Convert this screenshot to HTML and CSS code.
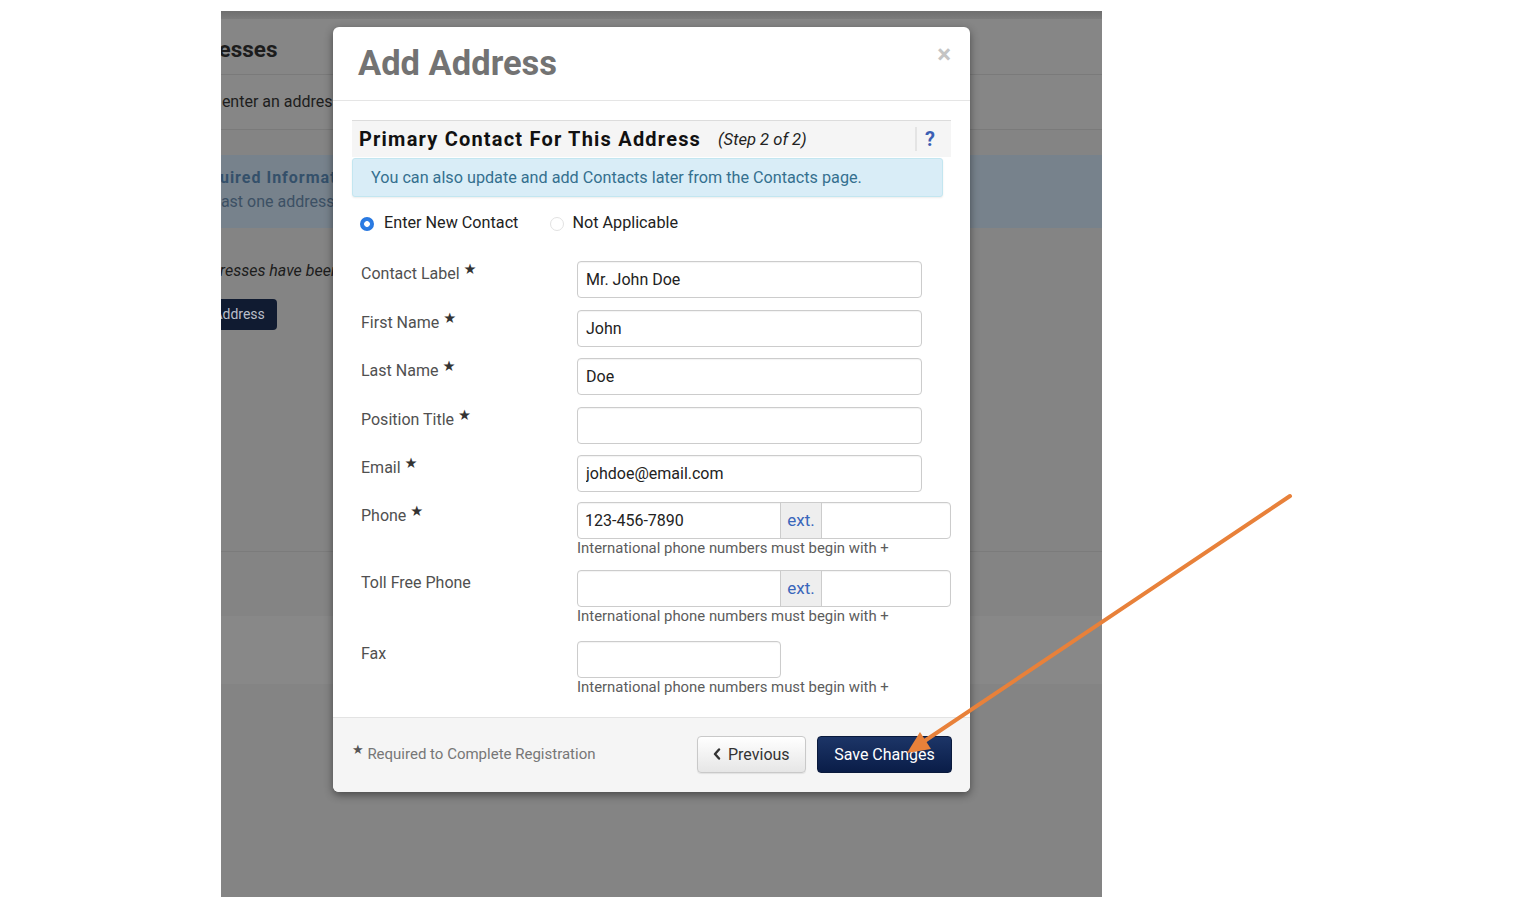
FILE: index.html
```html
<!DOCTYPE html>
<html lang="en">
<head>
<meta charset="utf-8">
<title>Add Address</title>
<link rel="stylesheet" href="styles.css">
</head>
<body>
<div class="canvas">
  <div class="shot">
    <div class="bg-page">
      <div class="bg-topbar"></div>
      <div class="bg-inner">
        <h2 class="bg-title">Addresses</h2>
        <p class="bg-intro">Please enter an address for your organization below.</p>
        <div class="bg-alert">
          <div class="bg-alert-title">Required Information</div>
          <div class="bg-alert-text">At least one address is required.</div>
        </div>
        <p class="bg-empty">No addresses have been entered yet.</p>
        <div class="bg-btn">Add Address</div>
      </div>
      <div class="bg-band1"></div>
      <div class="bg-band2"></div>
    </div>

    <div class="modal">
      <div class="modal-header">
        <h1 class="modal-title">Add Address</h1>
        <span class="modal-close">×</span>
      </div>
      <div class="modal-body">
        <div class="section-head">
          <span class="section-title">Primary Contact For This Address</span>
          <span class="section-step">(Step 2 of 2)</span>
          <span class="section-help">?</span>
        </div>
        <div class="info">You can also update and add Contacts later from the Contacts page.</div>
        <div class="radios">
          <label class="radio"><span class="radio-dot on"></span>Enter New Contact</label>
          <label class="radio radio-second"><span class="radio-dot"></span>Not Applicable</label>
        </div>
        <div class="form">
          <div class="row">
            <div class="label">Contact Label <span class="req">★</span></div>
            <div class="field"><input class="input" type="text" value="Mr. John Doe"></div>
          </div>
          <div class="row">
            <div class="label">First Name <span class="req">★</span></div>
            <div class="field"><input class="input" type="text" value="John"></div>
          </div>
          <div class="row">
            <div class="label">Last Name <span class="req">★</span></div>
            <div class="field"><input class="input" type="text" value="Doe"></div>
          </div>
          <div class="row">
            <div class="label">Position Title <span class="req">★</span></div>
            <div class="field"><input class="input" type="text" value=""></div>
          </div>
          <div class="row row-email">
            <div class="label">Email <span class="req">★</span></div>
            <div class="field"><input class="input" type="text" value="johdoe@email.com"></div>
          </div>
          <div class="row row-phone">
            <div class="label label-phone">Phone <span class="req">★</span></div>
            <div class="field">
              <div class="phone-group">
                <input class="phone-main" type="text" value="123-456-7890">
                <span class="addon">ext.</span>
                <input class="phone-ext" type="text" value="">
              </div>
              <div class="help">International phone numbers must begin with +</div>
            </div>
          </div>
          <div class="row row-toll">
            <div class="label">Toll Free Phone</div>
            <div class="field">
              <div class="phone-group">
                <input class="phone-main" type="text" value="">
                <span class="addon">ext.</span>
                <input class="phone-ext" type="text" value="">
              </div>
              <div class="help">International phone numbers must begin with +</div>
            </div>
          </div>
          <div class="row row-fax">
            <div class="label">Fax</div>
            <div class="field">
              <input class="input input-fax" type="text" value="">
              <div class="help">International phone numbers must begin with +</div>
            </div>
          </div>
        </div>
      </div>
      <div class="modal-footer">
        <div class="req-note"><span class="req">★</span> Required to Complete Registration</div>
        <div class="buttons">
          <button class="btn btn-default"><svg class="chev" width="8" height="12" viewBox="0 0 8 12"><path d="M6 1.5 L2 6 L6 10.5" fill="none" stroke="#333" stroke-width="2.4" stroke-linecap="round" stroke-linejoin="round"/></svg>Previous</button>
          <button class="btn btn-primary">Save Changes</button>
        </div>
      </div>
    </div>
  </div>

  <svg class="arrow" width="1527" height="910" viewBox="0 0 1527 910">
    <line x1="1290" y1="496" x2="923" y2="742" stroke="#e8813a" stroke-width="4" stroke-linecap="round"/>
    <polygon points="907,753 920,732 931,749" fill="#e8813a"/>
  </svg>
</div>
</body>
</html>
```
FILE: styles.css
```css
* { box-sizing: border-box; }

html, body {
  margin: 0;
  padding: 0;
  background: #ffffff;
  font-family: Roboto, "Liberation Sans", Arial, sans-serif;
}

.canvas {
  position: relative;
  width: 1527px;
  height: 910px;
  padding: 11px 0 0 221px;
  overflow: hidden;
}

.shot {
  position: relative;
  width: 881px;
  height: 886px;
  background: #848484;
  overflow: hidden;
}

/* ---------- dimmed background page ---------- */
.bg-page { width: 100%; }

.bg-topbar {
  height: 8px;
  background: linear-gradient(#6f6f6f, #7c7c7c);
}

.bg-inner {
  margin-left: -51px;
}

.bg-title {
  margin: 0;
  padding: 15px 0 10px 0;
  font-size: 22.5px;
  line-height: 30px;
  font-weight: 700;
  color: #1c1c1c;
  border-bottom: 1px solid #7a7a7a;
  background: #868686;
}

.bg-intro {
  margin: 0;
  padding: 15px 0 15px 0;
  font-size: 16px;
  line-height: 24px;
  color: #1d1d1d;
  border-bottom: 1px solid #7a7a7a;
  background: #868686;
}

.bg-alert {
  margin-top: 25px;
  padding: 11px 19px 14px 19px;
  background: #77828c;
  font-size: 16px;
  line-height: 24px;
}

.bg-alert-title {
  font-weight: 700;
  letter-spacing: 1px;
  color: #34506a;
}

.bg-alert-text { color: #3c5064; }

.bg-empty {
  margin: 31px 0 0 0;
  font-size: 16px;
  line-height: 24px;
  font-style: italic;
  color: #1c1c1c;
}

.bg-btn {
  display: inline-block;
  margin-top: 16px;
  margin-left: 3px;
  height: 31px;
  padding: 0 12px;
  line-height: 31px;
  font-size: 14px;
  color: #b9bec8;
  background: #101b31;
  border-radius: 4px;
}

.bg-band1 {
  margin-top: 221px;
  height: 65px;
  border-top: 1px solid #7b7b7b;
  background: #848484;
}

.bg-band2 {
  height: 68px;
  background: #888888;
}

/* ---------- modal ---------- */
.modal {
  position: absolute;
  left: 112px;
  top: 16px;
  width: 637px;
  background: #ffffff;
  border-radius: 6px;
  box-shadow: 0 3px 9px rgba(0, 0, 0, 0.45);
  overflow: hidden;
}

.modal-header {
  display: flex;
  justify-content: space-between;
  align-items: center;
  height: 74px;
  padding: 0 19px 1px 25px;
  border-bottom: 1px solid #e5e5e5;
}

.modal-title {
  margin: 0;
  font-size: 34.5px;
  line-height: 40px;
  font-weight: 700;
  color: #737373;
}

.modal-close {
  align-self: flex-start;
  margin-top: 14px;
  font-size: 26px;
  line-height: 26px;
  font-weight: 700;
  color: #c4c4c4;
}

.modal-body {
  padding: 19px 19px 21px 19px;
}

.section-head {
  display: flex;
  align-items: center;
  height: 37px;
  padding-left: 7px;
  background: #f5f5f5;
  border-top: 1px solid #dcdcdc;
}

.section-title {
  font-size: 20px;
  font-weight: 700;
  letter-spacing: 1.2px;
  color: #111111;
}

.section-step {
  margin-left: 17px;
  font-size: 16.6px;
  font-style: italic;
  color: #222222;
}

.section-help {
  margin-left: auto;
  margin-right: 16px;
  padding-left: 8px;
  height: 24px;
  line-height: 24px;
  border-left: 2px solid #e4e4e4;
  font-size: 20px;
  font-weight: 700;
  color: #3b5fb4;
}

.info {
  margin: 1px 8px 0 0;
  height: 39px;
  padding-left: 18px;
  line-height: 38px;
  font-size: 16.2px;
  color: #34708f;
  background: #d9edf7;
  border: 1px solid #c3e6f0;
  border-radius: 3px;
  box-shadow: 0 1px 2px rgba(0, 0, 0, 0.08);
}

.radios {
  display: flex;
  align-items: center;
  margin-top: 12px;
  height: 26px;
  padding-left: 8px;
  font-size: 16.2px;
  color: #222222;
}

.radio {
  display: flex;
  align-items: center;
}

.radio-second { margin-left: 32px; }

.radio-dot {
  width: 14px;
  height: 14px;
  margin-right: 10px;
  margin-top: 4px;
  border-radius: 50%;
  background: #ffffff;
  border: 1px solid #e2e2e2;
}

.radio-second .radio-dot { margin-right: 8px; }

.radio-dot.on {
  border: none;
  background: radial-gradient(circle, #ffffff 0, #ffffff 2.5px, #2f7fe6 3.2px, #1f6fd8 100%);
}

.form { margin-top: 26px; }

.row {
  display: grid;
  grid-template-columns: 225px 1fr;
  margin-bottom: 11.5px;
}

.row-email { margin-bottom: 9.5px; }
.row-phone { margin-bottom: 13px; }
.row-toll { margin-bottom: 16px; }
.row-fax { margin-bottom: 0; }

.label {
  padding: 2px 0 0 9px;
  font-size: 16px;
  line-height: 22px;
  color: #505050;
}

.label-phone { padding-top: 3px; }

.req {
  font-family: "DejaVu Sans", sans-serif;
  font-size: 14.5px;
  line-height: 10px;
  color: #333333;
  vertical-align: 5px;
}

.input {
  display: block;
  width: 345px;
  height: 37px;
  margin: 0;
  padding: 0 8px;
  font-family: Roboto, "Liberation Sans", Arial, sans-serif;
  font-size: 16px;
  color: #222222;
  background: #ffffff;
  border: 1px solid #cccccc;
  border-radius: 4px;
  box-shadow: inset 0 1px 1px rgba(0, 0, 0, 0.05);
  outline: none;
}

.input-fax { width: 204px; }

.phone-group {
  display: flex;
  width: 374px;
  height: 37px;
  border: 1px solid #cccccc;
  border-radius: 4px;
  overflow: hidden;
  box-shadow: inset 0 1px 1px rgba(0, 0, 0, 0.05);
}

.phone-main, .phone-ext {
  height: 35px;
  margin: 0;
  padding: 0 7px;
  border: none;
  background: transparent;
  font-family: Roboto, "Liberation Sans", Arial, sans-serif;
  font-size: 16px;
  color: #222222;
  outline: none;
}

.phone-main { width: 202px; }
.phone-ext { flex: 1; min-width: 0; }

.addon {
  width: 42px;
  text-align: center;
  line-height: 35px;
  font-size: 17px;
  color: #3a66bb;
  background: #eeeeee;
  border-left: 1px solid #cccccc;
  border-right: 1px solid #cccccc;
}

.help {
  font-size: 14.9px;
  line-height: 18px;
  color: #5c5c5c;
}

/* ---------- footer ---------- */
.modal-footer {
  display: flex;
  justify-content: space-between;
  align-items: center;
  height: 75px;
  padding: 0 18px 1px 19px;
  background: #f5f5f5;
  border-top: 1px solid #e3e3e3;
}

.req-note {
  font-size: 15px;
  color: #777777;
}

.req-note .req {
  color: #555555;
  font-size: 13px;
  vertical-align: 5px;
}

.buttons {
  display: flex;
  gap: 11px;
}

.btn {
  height: 37px;
  font-family: Roboto, "Liberation Sans", Arial, sans-serif;
  font-size: 16px;
  border-radius: 4px;
  cursor: pointer;
}

.btn-default {
  display: flex;
  align-items: center;
  width: 109px;
  padding: 0 0 0 15px;
  color: #333333;
  background: linear-gradient(#ffffff, #e6e6e6);
  border: 1px solid #c9c9c9;
  box-shadow: 0 1px 1px rgba(0, 0, 0, 0.08);
}

.chev { margin-right: 7px; }

.btn-primary {
  width: 135px;
  padding: 0;
  color: #ffffff;
  background: linear-gradient(#1c3567, #0a1d48);
  border: 1px solid #0a1a3c;
}

/* ---------- annotation arrow ---------- */
.arrow {
  position: absolute;
  left: 0;
  top: 0;
  pointer-events: none;
}
```
